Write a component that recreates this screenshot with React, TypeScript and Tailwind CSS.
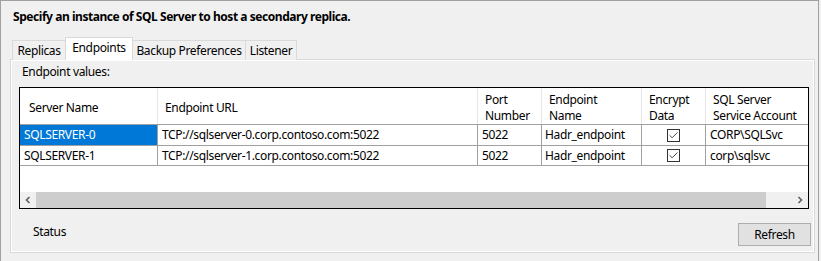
import { Check } from "lucide-react";

const rows = [
  { server: "SQLSERVER-0", url: "TCP://sqlserver-0.corp.contoso.com:5022", port: "5022", name: "Hadr_endpoint", account: "CORP\\SQLSvc", selected: true, h: "h-[21px]" },
  { server: "SQLSERVER-1", url: "TCP://sqlserver-1.corp.contoso.com:5022", port: "5022", name: "Hadr_endpoint", account: "corp\\sqlsvc", selected: false, h: "h-[20px]" },
];

const cols = "grid grid-cols-[138px_320px_64px_100px_64px_1fr]";

export default function App() {
  return (
    <div className="w-[821px] h-[261px] bg-[#f0f0f0] text-[12px] tracking-[-0.35px] text-black overflow-hidden" style={{ fontFamily: '"Noto Sans", "Open Sans", sans-serif' }}>
      <div className="w-[819px] h-[270px] border-l border-t border-r border-[#a0a0a0]">
        {/* Title */}
        <div className="pl-[12px] pt-[8px] font-bold leading-[16px] tracking-[-0.45px]">
          Specify an instance of SQL Server to host a secondary replica.
        </div>

        {/* Tabs */}
        <div className="flex items-end ml-[11px] mt-[12px] h-[23px] relative z-10 whitespace-nowrap">
          <div className="w-[53px] h-[20px] border border-r-0 border-b-0 border-[#d9d9d9] bg-[#f0f0f0] flex items-center justify-center leading-[16px]">Replicas</div>
          <div className="w-[68px] h-[23px] border border-b-0 border-[#d9d9d9] bg-white flex items-start justify-center pt-[2px] leading-[16px]">Endpoints</div>
          <div className="w-[113px] h-[20px] border border-l-0 border-b-0 border-[#d9d9d9] bg-[#f0f0f0] flex items-center justify-center leading-[16px]">Backup Preferences</div>
          <div className="w-[51px] h-[20px] border border-l-0 border-b-0 border-[#d9d9d9] bg-[#f0f0f0] flex items-center justify-center leading-[16px]">Listener</div>
        </div>

        {/* Tab page */}
        <div className="ml-[9px] -mt-px w-[805px] h-[194px] border border-[#d9d9d9]">
          <div className="h-full border border-white flex flex-col">
            <div className="pl-[10px] pt-[3px] leading-[16px]">Endpoint values:</div>

            {/* Grid */}
            <div className="ml-[7px] mt-[7px] w-[790px] h-[122px] border border-black bg-white flex flex-col">
              <div className={`${cols} h-[37px] border-b border-[#a0a0a0] leading-[16px] whitespace-nowrap`}>
                <div className="border-r border-[#e5e5e5] flex items-center pl-[9px] pt-[3px]"><div>Server Name</div></div>
                <div className="border-r border-[#e5e5e5] flex items-center pl-[7px] pt-[3px]"><div>Endpoint URL</div></div>
                <div className="border-r border-[#e5e5e5] flex items-center pl-[7px] pt-[3px]"><div>Port<br />Number</div></div>
                <div className="border-r border-[#e5e5e5] flex items-center pl-[7px] pt-[3px]"><div>Endpoint<br />Name</div></div>
                <div className="border-r border-[#e5e5e5] flex items-center pl-[7px] pt-[3px]"><div>Encrypt<br />Data</div></div>
                <div className="flex items-center pl-[7px] pt-[3px] overflow-hidden"><div>SQL Server<br />Service Account</div></div>
              </div>
              {rows.map((r) => (
                <div key={r.server} className={`${cols} ${r.h} border-b border-[#a0a0a0] whitespace-nowrap`}>
                  <div className={`border-r border-[#a0a0a0] pl-[4px] flex items-center ${r.selected ? "bg-[#0078d7] text-white" : ""}`}>{r.server}</div>
                  <div className="border-r border-[#a0a0a0] pl-[4px] flex items-center">{r.url}</div>
                  <div className="border-r border-[#a0a0a0] pl-[4px] flex items-center">{r.port}</div>
                  <div className="border-r border-[#a0a0a0] pl-[3px] flex items-center">{r.name}</div>
                  <div className="border-r border-[#a0a0a0] flex items-center justify-center">
                    <div className="w-[13px] h-[13px] border border-[#333333] bg-white flex items-center justify-center">
                      <Check className="w-[11px] h-[11px] text-[#333333]" strokeWidth={2} />
                    </div>
                  </div>
                  <div className="pl-[4px] flex items-center overflow-hidden">{r.account}</div>
                </div>
              ))}
              <div className="flex-1" />

              {/* Horizontal scrollbar */}
              <div className="h-[16px] flex bg-[#f0f0f0]">
                <div className="w-[16px] flex items-center justify-center">
                  <svg width="8" height="8" viewBox="0 0 8 8"><path d="M5.5 1 L2.5 4 L5.5 7" fill="none" stroke="#606060" strokeWidth="1.6" /></svg>
                </div>
                <div className="w-[730px] bg-[#cdcdcd]" />
                <div className="flex-1" />
                <div className="w-[16px] flex items-center justify-center">
                  <svg width="8" height="8" viewBox="0 0 8 8"><path d="M2.5 1 L5.5 4 L2.5 7" fill="none" stroke="#606060" strokeWidth="1.6" /></svg>
                </div>
              </div>
            </div>

            {/* Footer */}
            <div className="flex items-center justify-between mt-[14px] pl-[21px] pr-[2px]">
              <div className="leading-[16px] -mt-[5px]">Status</div>
              <button className="w-[73px] h-[23px] border border-[#adadad] bg-[#e1e1e1] leading-[16px]">Refresh</button>
            </div>
          </div>
        </div>
      </div>
    </div>
  );
}
